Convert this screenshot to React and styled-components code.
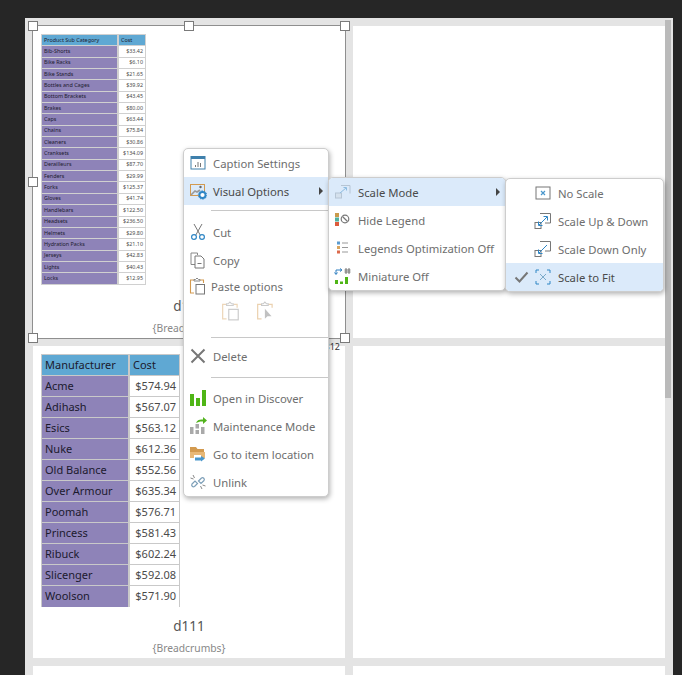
import React from "react";
import styled, { createGlobalStyle } from "styled-components";

const Global = createGlobalStyle`
  html, body { margin: 0; padding: 0; background: #262626; }
  body { font-family: "Noto Sans", "Open Sans", sans-serif; }
  #root { height: 675px; overflow: hidden; }
`;

const Stage = styled.div`
  position: relative;
  width: 682px;
  height: 675px;
  overflow: hidden;
  background: #262626;
  padding: 18px 9px 0 25px;
  box-sizing: border-box;
`;
const Board = styled.div`
  position: relative;
  height: 657px;
  overflow: hidden;
  background: #e4e4e4;
  box-sizing: border-box;
  padding: 8px;
  display: grid;
  grid-template-columns: 312px 312px;
  grid-auto-rows: 312px;
  gap: 8px;
`;
const ScrollThumb = styled.div`
  position: absolute;
  left: 640px;
  top: 2px;
  width: 6px;
  height: 378px;
  background: #bababa;
`;
const Card = styled.div`
  position: relative;
  background: #fff;
  padding: 8px 8px 0;
  box-sizing: border-box;
  display: flex;
  flex-direction: column;
`;
const Caption = styled.div`
  margin-top: auto;
  text-align: center;
  font-size: 13.5px;
  line-height: 18px;
  color: #555;
`;
const Crumbs = styled.div`
  text-align: center;
  font-size: 10.3px;
  line-height: 14px;
  color: #888;
  margin-top: 6px;
  margin-bottom: 3px;
`;
const Selection = styled.div`
  position: absolute;
  inset: -1px;
  border: 1px solid #8f8f8f;
  pointer-events: none;
`;
const Handle = styled.span`
  position: absolute;
  width: 8px;
  height: 8px;
  background: #fff;
  border: 1px solid #7a7a7a;
  left: ${(p) => p.$x}%;
  top: ${(p) => p.$y}%;
  transform: translate(-50%, -50%);
`;
const SizeTag = styled.div`
  position: absolute;
  left: 258px;
  top: 323px;
  width: 57px;
  text-align: right;
  font-size: 9px;
  line-height: 12px;
  color: #333;
`;

const Table = styled.div`
  display: grid;
  width: ${(p) => (p.$mini ? 105 : 139)}px;
  grid-template-columns: ${(p) => (p.$mini ? "77px 28px" : "88px 51px")};
  grid-auto-rows: ${(p) => (p.$mini ? "11.35px" : "21px")};
  font-size: ${(p) => (p.$mini ? "5.4px" : "11px")};
  color: #1c1a2e;
`;
const Cell = styled.div`
  box-sizing: border-box;
  display: flex;
  align-items: center;
  justify-content: ${(p) => (p.$num ? "flex-end" : "flex-start")};
  padding: 0 ${(p) => (p.$mini ? 2 : 3)}px ${(p) => (p.$mini ? 1 : 2)}px;
  background: ${(p) => (p.$head ? "#5fa8d3" : p.$num ? "#fff" : "#8e83b8")};
  color: ${(p) => (p.$num ? "#4a4a4a" : "#1c1a2e")};
  border: 1px solid ${(p) => (p.$mini ? "#d0d0d0" : "#c9c9c9")};
  border-width: ${(p) => (p.$last ? "1px 1px 0 1px" : "1px")};
  margin: 0 0 -1px 0;
  overflow: hidden;
  white-space: nowrap;
`;

const Menu = styled.div`
  position: absolute;
  left: ${(p) => p.$x}px;
  top: ${(p) => p.$y}px;
  width: ${(p) => p.$w}px;
  box-sizing: border-box;
  background: #fff;
  border: 1px solid #cdcdcd;
  border-radius: 5px;
  box-shadow: 1px 2px 5px rgba(0, 0, 0, 0.3);
  display: flex;
  flex-direction: column;
  overflow: hidden;
`;
const Item = styled.div`
  position: relative;
  height: 28px;
  flex: none;
  display: flex;
  align-items: center;
  background: ${(p) => (p.$active ? "#dbeafa" : "transparent")};
  color: ${(p) => (p.$active ? "#4a4a4a" : "#6e6e6e")};
  font-size: 11.3px;
  white-space: nowrap;
`;
const Check = styled.span`
  width: 27px;
  flex: none;
  display: flex;
  justify-content: center;
  padding-left: 4px;
  box-sizing: border-box;
`;
const IconBox = styled.span`
  width: 20px;
  flex: none;
  margin: 0 5px 0 ${(p) => (p.$wide ? 0 : 4)}px;
  display: flex;
  justify-content: center;
`;
const Arrow = styled.span`
  position: absolute;
  right: 5px;
  top: 10px;
  width: 0;
  height: 0;
  border-left: 4px solid #444;
  border-top: 4px solid transparent;
  border-bottom: 4px solid transparent;
`;
const Sep = styled.div`
  height: 1px;
  background: #c8c8c8;
  margin: ${(p) => p.$t}px 0 ${(p) => p.$b}px 27px;
  flex: none;
`;
const PasteHead = styled(Item)`
  height: 24px;
`;
const PasteLabel = styled.span`
  margin-left: -2px;
`;
const PasteRow = styled.div`
  display: flex;
  height: 26px;
  flex: none;
  gap: 15px;
  padding-left: 37px;
  align-items: center;
`;

const Svg = ({ children, w = 18, h = 18 }) => (
  <svg width={w} height={h} viewBox="0 0 18 18" fill="none" style={{ display: "block" }}>
    {children}
  </svg>
);

const CaptionIcon = () => (
  <Svg>
    <rect x="2" y="2.5" width="14" height="12.5" fill="#fff" stroke="#3f80ac" />
    <rect x="2" y="2.5" width="14" height="2.5" fill="#3f80ac" />
    <path d="M6.5 13v-2M9 13V8M11.5 13v-4" stroke="#777" />
  </Svg>
);
const VisualIcon = () => (
  <Svg>
    <rect x="1.5" y="2.5" width="14" height="11" stroke="#d39a4f" />
    <path d="M2 13l4-4 2 1 3-2" stroke="#999" strokeWidth="1.6" />
    <circle cx="11.5" cy="5" r="1.2" fill="#666" />
    <circle cx="13.5" cy="13" r="3" fill="#fff" stroke="#2e86c6" strokeWidth="1.8" />
    <circle cx="13.5" cy="13" r="4.2" stroke="#2e86c6" strokeDasharray="1.3 1.3" />
  </Svg>
);
const CutIcon = () => (
  <Svg>
    <path d="M5 1l6.2 11M13 1L6.8 12" stroke="#777" />
    <circle cx="5" cy="14" r="2.4" stroke="#2f86c5" strokeWidth="1.2" />
    <circle cx="13" cy="14" r="2.4" stroke="#2f86c5" strokeWidth="1.2" />
  </Svg>
);
const CopyIcon = () => (
  <Svg>
    <path d="M6 13.5H2V2h6.5v2" stroke="#888" />
    <path d="M6 5h6l3 3v9H6z" fill="#fff" stroke="#777" />
    <path d="M8.5 12.5h4" stroke="#777" />
  </Svg>
);
const PasteIcon = ({ faded }) => (
  <Svg w={faded ? 20 : 18} h={faded ? 20 : 18}>
    <g opacity={faded ? 0.4 : 1}>
      <path d="M5 3H1.5v13H5M11 3h3.5v3" stroke="#d39a4f" strokeWidth="1.1" />
      <path d="M5 4V2.5h1.5L8 1l1.5 1.5H11V4z" fill="#fff" stroke="#888" />
      <rect x="7" y="7.5" width="8.5" height="9.5" fill="#fff" stroke="#777" />
    </g>
  </Svg>
);
const PasteLinkIcon = () => (
  <Svg w={20} h={20}>
    <g opacity="0.45">
      <path d="M5 3H1.5v13H5M11 3h3.5v3" stroke="#d39a4f" strokeWidth="1.1" />
      <path d="M5 4V2.5h1.5L8 1l1.5 1.5H11V4z" fill="#fff" stroke="#888" />
      <path d="M8 7v9l2.3-2.3 3.7 0z" fill="#777" />
    </g>
  </Svg>
);
const DeleteIcon = () => (
  <Svg>
    <path d="M2.5 2.5l13 13M15.5 2.5l-13 13" stroke="#777" strokeWidth="2" />
  </Svg>
);
const DiscoverIcon = () => (
  <Svg>
    <path d="M1 5h4v12H1zM7 9h4v8H7zM13 1h4v16h-4z" fill="#4fb516" />
  </Svg>
);
const MaintIcon = () => (
  <Svg>
    <path d="M1 10h3.5v7H1zM6.5 13H10v4H6.5zM6.5 7H10v4.5H6.5zM12 10h3.5v7H12z" fill="#a9a9a9" />
    <path d="M7 6c1-3 4-4 7-3.5V0l4 3.5L14 7V4.5C11 4.3 9 5 7 6z" fill="#52b31d" />
  </Svg>
);
const FolderIcon = () => (
  <Svg>
    <path d="M1 2h6l1.5 2H15v3H1z" fill="#d39a4f" />
    <path d="M1 7h15v6H1z" fill="#e8b877" />
    <path d="M5 10h7v7H5z" fill="#fff" />
    <path d="M6 12.5h6v3H6z" fill="#4a97cc" />
    <path d="M12 11l4 2.5-4 3z" fill="#4a97cc" />
  </Svg>
);
const UnlinkIcon = () => (
  <Svg>
    <path d="M3 11l3-3 2.5 2.5-3 3a1.8 1.8 0 01-2.5-2.5zM9.5 8L12.5 5a1.8 1.8 0 012.5 2.5L12 10.5z" stroke="#7d9fb8" strokeWidth="1.2" />
    <path d="M4 2l1.5 3M1.5 5l3 1M13 16l-1.5-3M16.5 13l-3-1" stroke="#888" />
  </Svg>
);
const ScaleModeIcon = () => (
  <Svg>
    <g opacity="0.45">
      <rect x="1.5" y="10" width="6" height="5" stroke="#8a9aa8" fill="#cfd8df" />
      <path d="M7 2.5h9v8" stroke="#8a9aa8" />
      <path d="M6 10l6-5M9.5 4.5h3v3" stroke="#2f86c5" />
    </g>
  </Svg>
);
const HideLegendIcon = () => (
  <Svg>
    <rect x="1" y="2" width="4" height="4" fill="#c99a4c" />
    <rect x="1" y="6.5" width="4" height="4" fill="#4fb0a0" />
    <rect x="1" y="11" width="4" height="4" fill="#dc5b3c" />
    <circle cx="11" cy="8" r="3.8" stroke="#777" strokeWidth="1.2" />
    <path d="M8.5 5.5l5 5" stroke="#777" strokeWidth="1.2" />
  </Svg>
);
const LegendsIcon = () => (
  <Svg>
    <rect x="3" y="2.5" width="3" height="3" fill="#5b9bd0" />
    <rect x="3" y="7" width="3" height="3" fill="#d8a45e" />
    <rect x="3" y="11.5" width="3" height="3" fill="#dc6a4c" />
    <path d="M8 4h6M8 8.5h6M8 13h6" stroke="#999" />
  </Svg>
);
const MiniatureIcon = () => (
  <Svg>
    <path d="M2 3v4M2 3h5M6 1.5L8 3 6 4.5M0.5 5.5L2 7.5l1.5-2" stroke="#2f7fc0" />
    <path d="M12 1v6M15 1v6M10.5 3h6M10.5 5h6" stroke="#666" strokeWidth="0.9" />
    <path d="M1 13h3v4H1zM6 14.5h3V17H6zM11 10h3v7h-3z" fill="#4fb516" />
  </Svg>
);
const NoScaleIcon = () => (
  <Svg>
    <rect x="2" y="3" width="14" height="12" stroke="#777" />
    <path d="M7 7l4 4M11 7l-4 4" stroke="#4a97cc" strokeWidth="1.2" />
  </Svg>
);
const UpDownIcon = () => (
  <Svg>
    <rect x="1" y="10.5" width="6" height="6" stroke="#777" />
    <path d="M6 1.5h10.5V11H11" stroke="#777" />
    <path d="M5 13l8-8M9.5 4.5h4v4M4.5 9.5v4h4" stroke="#2f86c5" />
  </Svg>
);
const DownOnlyIcon = () => (
  <Svg>
    <rect x="1" y="10.5" width="6" height="6" stroke="#777" />
    <path d="M6 1.5h10.5V11H11" stroke="#777" />
    <path d="M13 5l-8 8M4.5 9.5v4h4" stroke="#2f86c5" />
  </Svg>
);
const FitIcon = () => (
  <Svg>
    <path d="M2 5V2h3M13 2h3v3M2 13v3h3M13 16h3v-3" stroke="#2f86c5" />
    <path d="M6 6l6 6M12 6l-6 6" stroke="#7aa9c9" />
  </Svg>
);
const CheckMark = () => (
  <svg width="15" height="12" viewBox="0 0 15 12" fill="none" style={{ display: "block" }}>
    <path d="M1.5 6.5L5.5 10.5L13.5 1.5" stroke="#777" strokeWidth="2" />
  </svg>
);

const small = [
  ["Bib-Shorts", "$33.42"], ["Bike Racks", "$6.10"], ["Bike Stands", "$21.65"],
  ["Bottles and Cages", "$39.92"], ["Bottom Brackets", "$43.45"], ["Brakes", "$80.00"],
  ["Caps", "$63.44"], ["Chains", "$75.84"], ["Cleaners", "$30.86"], ["Cranksets", "$134.09"],
  ["Derailleurs", "$87.70"], ["Fenders", "$29.99"], ["Forks", "$125.37"], ["Gloves", "$41.74"],
  ["Handlebars", "$122.50"], ["Headsets", "$236.50"], ["Helmets", "$29.80"],
  ["Hydration Packs", "$21.10"], ["Jerseys", "$42.83"], ["Lights", "$40.43"], ["Locks", "$12.95"],
];
const large = [
  ["Acme", "$574.94"], ["Adihash", "$567.07"], ["Esics", "$563.12"], ["Nuke", "$612.36"],
  ["Old Balance", "$552.56"], ["Over Armour", "$635.34"], ["Poomah", "$576.71"],
  ["Princess", "$581.43"], ["Ribuck", "$602.24"], ["Slicenger", "$592.08"], ["Woolson", "$571.90"],
];

const DataTable = ({ head, rows, mini }) => (
  <Table $mini={mini}>
    <Cell $head $mini={mini}>{head}</Cell>
    <Cell $head $mini={mini}>Cost</Cell>
    {rows.map(([a, b], i) => (
      <React.Fragment key={a}>
        <Cell $mini={mini} $last={!mini && i === rows.length - 1}>{a}</Cell>
        <Cell $mini={mini} $num $last={!mini && i === rows.length - 1}>{b}</Cell>
      </React.Fragment>
    ))}
  </Table>
);

const Row = ({ icon, label, active, arrow, check }) => (
  <Item $active={active}>
    {check !== undefined && <Check>{check ? <CheckMark /> : null}</Check>}
    <IconBox $wide={check !== undefined}>{icon}</IconBox>
    {label}
    {arrow && <Arrow />}
  </Item>
);

export default function App() {
  return (
    <Stage>
      <Global />
      <Board>
        <Card>
          <DataTable head="Product Sub Category" rows={small} mini />
          <Caption>d111</Caption>
          <Crumbs>{"{Breadcrumbs}"}</Crumbs>
          <Selection>
            {[[0, 0], [50, 0], [100, 0], [0, 50], [100, 50], [0, 100], [50, 100], [100, 100]].map(([x, y]) => (
              <Handle key={`${x}-${y}`} $x={x} $y={y} />
            ))}
          </Selection>
        </Card>
        <Card />
        <Card>
          <DataTable head="Manufacturer" rows={large} />
          <Caption>d111</Caption>
          <Crumbs>{"{Breadcrumbs}"}</Crumbs>
        </Card>
        <Card />
        <Card />
        <Card />
        <SizeTag>312 x 312</SizeTag>
        <ScrollThumb />
      </Board>

      <Menu $x={183} $y={148} $w={146}>
        <Row icon={<CaptionIcon />} label="Caption Settings" />
        <Row icon={<VisualIcon />} label="Visual Options" active arrow />
        <Sep $t={5} $b={7} />
        <Row icon={<CutIcon />} label="Cut" />
        <Row icon={<CopyIcon />} label="Copy" />
        <PasteHead>
          <IconBox><PasteIcon /></IconBox>
          <PasteLabel>Paste options</PasteLabel>
        </PasteHead>
        <PasteRow>
          <PasteIcon faded />
          <PasteLinkIcon />
        </PasteRow>
        <Sep $t={13} $b={4} />
        <Row icon={<DeleteIcon />} label="Delete" />
        <Sep $t={7} $b={6} />
        <Row icon={<DiscoverIcon />} label="Open in Discover" />
        <Row icon={<MaintIcon />} label="Maintenance Mode" />
        <Row icon={<FolderIcon />} label="Go to item location" />
        <Row icon={<UnlinkIcon />} label="Unlink" />
      </Menu>

      <Menu $x={328} $y={177} $w={178}>
        <Row icon={<ScaleModeIcon />} label="Scale Mode" active arrow />
        <Row icon={<HideLegendIcon />} label="Hide Legend" />
        <Row icon={<LegendsIcon />} label="Legends Optimization Off" />
        <Row icon={<MiniatureIcon />} label="Miniature Off" />
      </Menu>

      <Menu $x={505} $y={178} $w={159}>
        <Row check={false} icon={<NoScaleIcon />} label="No Scale" />
        <Row check={false} icon={<UpDownIcon />} label="Scale Up &amp; Down" />
        <Row check={false} icon={<DownOnlyIcon />} label="Scale Down Only" />
        <Row check icon={<FitIcon />} label="Scale to Fit" active />
      </Menu>
    </Stage>
  );
}
